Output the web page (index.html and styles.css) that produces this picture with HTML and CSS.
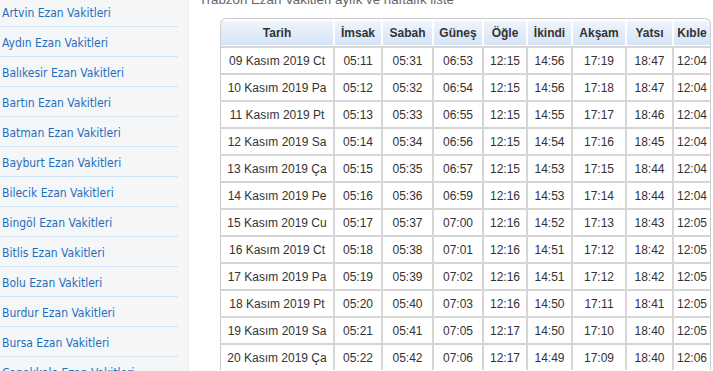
FILE: index.html
```html
<!DOCTYPE html>
<html lang="tr">
<head>
<meta charset="utf-8">
<title>Trabzon Ezan Vakitleri</title>
<link rel="stylesheet" href="styles.css">
</head>
<body>
<div class="page">
  <aside class="sidebar">
    <ul class="city-list">
      <li><a href="#">Artvin Ezan Vakitleri</a></li>
      <li><a href="#">Aydın Ezan Vakitleri</a></li>
      <li><a href="#">Balıkesir Ezan Vakitleri</a></li>
      <li><a href="#">Bartın Ezan Vakitleri</a></li>
      <li><a href="#">Batman Ezan Vakitleri</a></li>
      <li><a href="#">Bayburt Ezan Vakitleri</a></li>
      <li><a href="#">Bilecik Ezan Vakitleri</a></li>
      <li><a href="#">Bingöl Ezan Vakitleri</a></li>
      <li><a href="#">Bitlis Ezan Vakitleri</a></li>
      <li><a href="#">Bolu Ezan Vakitleri</a></li>
      <li><a href="#">Burdur Ezan Vakitleri</a></li>
      <li><a href="#">Bursa Ezan Vakitleri</a></li>
      <li><a href="#">Çanakkale Ezan Vakitleri</a></li>
    </ul>
  </aside>
  <main class="main">
    <h2 class="title">Trabzon Ezan Vakitleri aylık ve haftalık liste</h2>
    <div class="table-wrap">
      <table class="times">
        <colgroup>
          <col class="c-date"><col class="c-imsak"><col class="c-sabah"><col class="c-gunes"><col class="c-ogle"><col class="c-ikindi"><col class="c-aksam"><col class="c-yatsi"><col class="c-kible">
        </colgroup>
        <thead>
          <tr><th>Tarih</th><th>İmsak</th><th>Sabah</th><th>Güneş</th><th>Öğle</th><th>İkindi</th><th>Akşam</th><th>Yatsı</th><th>Kıble</th></tr>
        </thead>
        <tbody>
          <tr><td>09 Kasım 2019 Ct</td><td>05:11</td><td>05:31</td><td>06:53</td><td>12:15</td><td>14:56</td><td>17:19</td><td>18:47</td><td>12:04</td></tr>
          <tr><td>10 Kasım 2019 Pa</td><td>05:12</td><td>05:32</td><td>06:54</td><td>12:15</td><td>14:56</td><td>17:18</td><td>18:47</td><td>12:04</td></tr>
          <tr><td>11 Kasım 2019 Pt</td><td>05:13</td><td>05:33</td><td>06:55</td><td>12:15</td><td>14:55</td><td>17:17</td><td>18:46</td><td>12:04</td></tr>
          <tr><td>12 Kasım 2019 Sa</td><td>05:14</td><td>05:34</td><td>06:56</td><td>12:15</td><td>14:54</td><td>17:16</td><td>18:45</td><td>12:04</td></tr>
          <tr><td>13 Kasım 2019 Ça</td><td>05:15</td><td>05:35</td><td>06:57</td><td>12:15</td><td>14:53</td><td>17:15</td><td>18:44</td><td>12:04</td></tr>
          <tr><td>14 Kasım 2019 Pe</td><td>05:16</td><td>05:36</td><td>06:59</td><td>12:16</td><td>14:53</td><td>17:14</td><td>18:44</td><td>12:04</td></tr>
          <tr><td>15 Kasım 2019 Cu</td><td>05:17</td><td>05:37</td><td>07:00</td><td>12:16</td><td>14:52</td><td>17:13</td><td>18:43</td><td>12:05</td></tr>
          <tr><td>16 Kasım 2019 Ct</td><td>05:18</td><td>05:38</td><td>07:01</td><td>12:16</td><td>14:51</td><td>17:12</td><td>18:42</td><td>12:05</td></tr>
          <tr><td>17 Kasım 2019 Pa</td><td>05:19</td><td>05:39</td><td>07:02</td><td>12:16</td><td>14:51</td><td>17:12</td><td>18:42</td><td>12:05</td></tr>
          <tr><td>18 Kasım 2019 Pt</td><td>05:20</td><td>05:40</td><td>07:03</td><td>12:16</td><td>14:50</td><td>17:11</td><td>18:41</td><td>12:05</td></tr>
          <tr><td>19 Kasım 2019 Sa</td><td>05:21</td><td>05:41</td><td>07:05</td><td>12:17</td><td>14:50</td><td>17:10</td><td>18:40</td><td>12:05</td></tr>
          <tr><td>20 Kasım 2019 Ça</td><td>05:22</td><td>05:42</td><td>07:06</td><td>12:17</td><td>14:49</td><td>17:09</td><td>18:40</td><td>12:06</td></tr>
        </tbody>
      </table>
    </div>
  </main>
</div>
</body>
</html>
```
FILE: styles.css
```css
html, body {
  margin: 0;
  padding: 0;
  background: #ffffff;
  overflow: hidden;
}

.page {
  display: flex;
  align-items: flex-start;
  height: 371px;
  overflow: hidden;
}

.sidebar {
  width: 180px;
  padding-right: 8px;
  height: 371px;
  flex: none;
  background-color: #f5f6f7;
  border-right: 1px solid #ebeced;
}

.city-list {
  list-style: none;
  margin: -3px 0 0 0;
  padding: 0;
  width: 178px;
}

.city-list li {
  height: 29px;
  line-height: 29px;
  border-bottom: 1px solid #cfe5f6;
  padding-left: 2px;
  white-space: nowrap;
}

.city-list a {
  font-family: "DejaVu Sans Condensed", "DejaVu Sans", sans-serif;
  font-size: 12px;
  color: #1f6fbe;
  text-decoration: none;
}

.main {
  flex: 1;
  min-width: 0;
  margin-top: -8px;
  padding-left: 10px;
}

.title {
  margin: 0 0 10px 0;
  font-family: "Liberation Sans", Arial, sans-serif;
  font-size: 13.3px;
  line-height: 16px;
  font-weight: normal;
  color: #666666;
  white-space: nowrap;
}

.table-wrap {
  margin-left: 21px;
  width: 489px;
  border: 1px solid #cccccc;
  border-bottom: none;
  border-radius: 6px 6px 0 0;
  padding-top: 2px;
}

.times {
  border-collapse: separate;
  border-spacing: 0;
  table-layout: fixed;
  width: 489px;
  font-family: "Liberation Sans", Arial, sans-serif;
  font-size: 12px;
  color: #333333;
}

.c-date { width: 114px; }
.c-imsak { width: 48px; }
.c-sabah { width: 51px; }
.c-gunes { width: 50px; }
.c-ogle { width: 44px; }
.c-ikindi { width: 45px; }
.c-aksam { width: 54px; }
.c-yatsi { width: 47px; }
.c-kible { width: 36px; }

.times th {
  height: 24px;
  padding: 0;
  font-weight: bold;
  text-align: center;
  background: linear-gradient(#eef4fc, #d5e4f6);
  border-right: 2px solid #ffffff;
  border-bottom: 1px solid #ffffff;
}

.times th:first-child {
  border-top-left-radius: 4px;
}

.times th:last-child {
  border-right: none;
  border-top-right-radius: 4px;
}

.times td {
  height: 25px;
  padding: 0;
  text-align: center;
  white-space: nowrap;
  border-top: 2px solid #d6d6d6;
  border-right: 2px solid #d6d6d6;
}

.times td:last-child {
  border-right: none;
}
```
